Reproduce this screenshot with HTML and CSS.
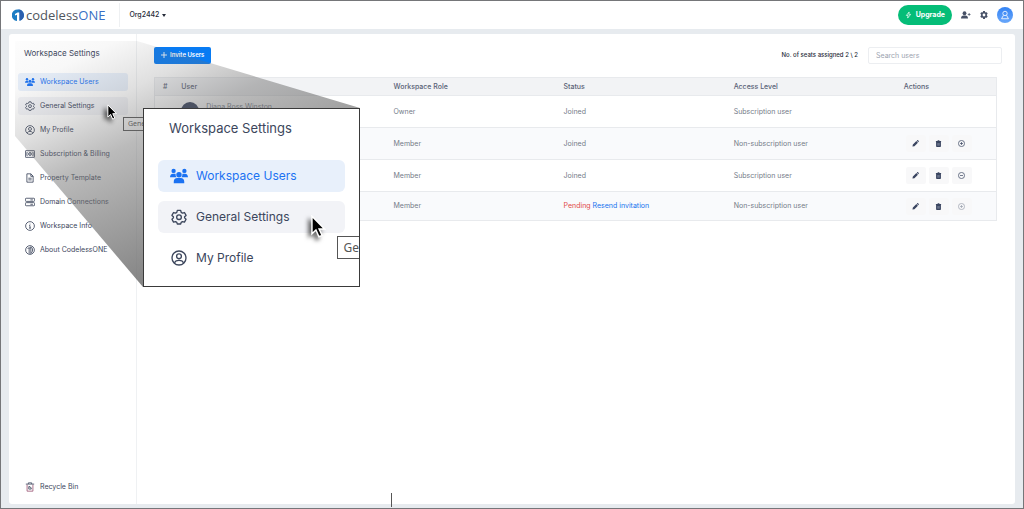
FILE: index.html
```html
<!DOCTYPE html>
<html lang="en">
<head>
<meta charset="utf-8">
<title>Workspace Users</title>
<link rel="stylesheet" href="styles.css">
</head>
<body>
<svg class="defs" aria-hidden="true">
  <symbol id="users" viewBox="0 0 24 20"><g fill="currentColor"><circle cx="12" cy="8.400" r="3.600"/><circle cx="4.800" cy="3.200" r="2.900"/><circle cx="19.200" cy="3.200" r="2.900"/><path d="M5 19.500v-2c0-3 2-4.700 4.500-4.700h5c2.500 0 4.500 1.700 4.500 4.700v2zM0 11.800c0-3 1.500-4.900 4-4.900h2c.6 0 1.100.1 1.500.3-.1 2 .3 3.400 1.400 4.600zM24 11.800c0-3-1.500-4.900-4-4.900h-2c-.6 0-1.100.1-1.500.3.1 2-.3 3.400-1.400 4.600z"/></g></symbol>
  <symbol id="gear" viewBox="0 0 24 24"><g fill="none" stroke="currentColor" stroke-width="2" stroke-linejoin="round"><path d="M9.500 2h5l.8 3 1.900 1.100 3-.8 2.400 4.300-2.200 2.100v1.600l2.200 2.100-2.400 4.300-3-.8-1.900 1.100-.8 2.500h-5l-.8-2.500-1.900-1.100-3 .8-2.400-4.300 2.200-2.100v-1.600l-2.200-2.100 2.400-4.300 3 .8L8.700 5z"/><circle cx="12" cy="12.300" r="3.500"/></g></symbol>
  <symbol id="profile" viewBox="0 0 24 24"><g fill="none" stroke="currentColor" stroke-width="2"><circle cx="12" cy="12" r="10.500"/><circle cx="12" cy="9.500" r="3.600"/><path d="M5.500 19.500c.5-3 3-4 6.500-4s6 1 6.500 4"/></g></symbol>
  <symbol id="money" viewBox="0 0 24 24"><g fill="none" stroke="currentColor" stroke-width="2"><rect x="1" y="4" width="22" height="16" rx="1"/><circle cx="12" cy="12" r="3.500"/><path d="M6 8H4.500v8H6M18 8h1.500v8H18M12 10v4"/></g></symbol>
  <symbol id="file" viewBox="0 0 24 24"><g fill="none" stroke="currentColor" stroke-width="2"><path d="M4.500 2H14l5.500 5.500V22h-15zM14 2v6h5.500M8 12.500h8M8 16.500h8"/></g></symbol>
  <symbol id="server" viewBox="0 0 24 24"><g fill="none" stroke="currentColor" stroke-width="2"><rect x="1" y="3" width="22" height="7.500" rx="2"/><rect x="1" y="13.500" width="22" height="7.500" rx="2"/><path d="M13 7h6M13 17.500h6"/></g></symbol>
  <symbol id="info" viewBox="0 0 24 24"><g fill="none" stroke="currentColor" stroke-width="2"><circle cx="12" cy="12" r="10.500"/><path d="M10 11h2v6M9.500 17h5M12 6.500v2"/></g></symbol>
  <symbol id="about" viewBox="0 0 24 24"><g fill="none" stroke="currentColor" stroke-width="2"><circle cx="12" cy="12" r="10.500"/><path d="M6 8l4-1v14M14 21V4c3 2 4 4 4 8s-1 6-4 8M10 7h4"/></g></symbol>
  <symbol id="bin" viewBox="0 0 24 24"><g fill="none" stroke-width="2"><path stroke="#9a5673" d="M5 6v16h14V6"/><path stroke="#465066" d="M2 5h20M8 5V2h8v3M9 11h3v3h3v3H9z"/></g></symbol>
  <symbol id="pencil" viewBox="0 0 16 16"><path fill="currentColor" d="M1 15l1-4.500L10 2.500 13.500 6l-8 8zM11 1.600l1-.9c.6-.6 1.400-.6 2 0L15.300 2c.6.6.6 1.400 0 2l-.9 1z"/></symbol>
  <symbol id="trash" viewBox="0 0 16 16"><path fill="currentColor" d="M2 2h3.500l1-1.500h3l1 1.500H14v2H2zM2.500 4h11v10.500c0 .8-.6 1.500-1.500 1.500H4c-.9 0-1.500-.7-1.500-1.500z"/><path stroke="#9aa3b5" d="M6 7v6M8 7v6M10 7v6"/></symbol>
  <symbol id="plus-circle" viewBox="0 0 16 16"><g fill="none" stroke="currentColor" stroke-width="1.600"><circle cx="8" cy="8" r="7"/><path d="M4.500 8h7M8 4.500v7"/></g></symbol>
  <symbol id="minus-circle" viewBox="0 0 16 16"><g fill="none" stroke="currentColor" stroke-width="1.600"><circle cx="8" cy="8" r="7"/><path d="M4.500 8h7"/></g></symbol>
  <symbol id="pointer" viewBox="0 0 12 19"><path fill="#000" stroke="#fff" stroke-width="1.200" d="M1 1v14.500l3.300-3.100 2.500 5.600 2.600-1.100-2.500-5.400h4.500z"/></symbol>
</svg>
<div class="app">
  <header class="topbar">
    <a class="brand" href="#" aria-label="codelessONE">
      <svg class="brand-mark" viewBox="0 0 24 26"><path fill="#1c7dc4" d="M12 1a11.500 11.500 0 0 1 3 22.700V7h-4L6 10v3l4-1.500V24A11.500 11.500 0 0 1 12 1z"/><path fill="#2c5fae" d="M15 7v16.700A11.500 11.500 0 0 0 12 1c3 1 3 4 3 6z"/></svg>
      <span class="brand-name">codeless<span class="brand-one">ONE</span></span>
    </a>
    <button class="org">Org2442 <span class="caret"></span></button>
    <div class="top-actions">
      <button class="upgrade"><svg viewBox="0 0 16 16"><path fill="none" stroke="#fff" stroke-width="1.600" stroke-linejoin="round" d="M9.500 1L3 9h4l-1 6 7-8.500H8.500z"/></svg>Upgrade</button>
      <button class="icon-btn" aria-label="Add user"><svg viewBox="0 0 20 16"><g fill="currentColor"><circle cx="7" cy="4.500" r="3.800"/><path d="M0 15c0-4 2-6 5-6h4c3 0 5 2 5 6zM15.500 4h1.500v2h2v1.500h-2v2h-1.500v-2h-2V6h2z"/></g></svg></button>
      <button class="icon-btn gear-btn" aria-label="Settings"><svg viewBox="0 0 16 16"><path fill="currentColor" fill-rule="evenodd" d="M6.300 0h3.400l.5 2.200 1.300.8 2.200-.7 1.700 3-1.600 1.600v2.200l1.600 1.600-1.700 3-2.200-.7-1.300.8-.5 2.200H6.300l-.5-2.200-1.300-.8-2.200.7-1.700-3 1.600-1.600V6.900L.6 5.300l1.700-3 2.200.7 1.300-.8zM8 5.200a2.800 2.800 0 1 0 0 5.600 2.800 2.800 0 0 0 0-5.600z"/></svg></button>
      <button class="account" aria-label="Account"><svg viewBox="0 0 16 16"><g fill="none" stroke="#fff" stroke-width="1.300"><circle cx="8" cy="5.500" r="3.500"/><path d="M5.500 8.500L2.500 14h11l-3-5.500"/></g></svg></button>
    </div>
  </header>

  <main class="panel">
    <aside class="sidebar">
      <h1 class="side-title">Workspace Settings</h1>
      <nav class="side-nav">
        <a class="side-link active" href="#"><svg><use href="#users"/></svg>Workspace Users</a>
        <a class="side-link hover" href="#"><svg><use href="#gear"/></svg>General Settings</a>
        <a class="side-link" href="#"><svg><use href="#profile"/></svg>My Profile</a>
        <a class="side-link" href="#"><svg><use href="#money"/></svg>Subscription &amp; Billing</a>
        <a class="side-link" href="#"><svg><use href="#file"/></svg>Property Template</a>
        <a class="side-link" href="#"><svg><use href="#server"/></svg>Domain Connections</a>
        <a class="side-link" href="#"><svg><use href="#info"/></svg>Workspace Info</a>
        <a class="side-link" href="#"><svg><use href="#about"/></svg>About CodelessONE</a>
        <a class="side-link recycle" href="#"><svg><use href="#bin"/></svg>Recycle Bin</a>
      </nav>
    </aside>

    <section class="content">
      <div class="toolbar">
        <button class="invite"><svg viewBox="0 0 10 10"><path stroke="#fff" stroke-width="1.500" d="M5 0v10M0 5h10"/></svg>Invite Users</button>
        <span class="seats">No. of seats assigned 2 \ 2</span>
        <input class="search" type="search" placeholder="Search users" aria-label="Search users">
      </div>
      <table class="users">
        <colgroup><col class="c-num"><col class="c-user"><col class="c-mid"><col class="c-mid"><col class="c-mid"><col></colgroup>
        <thead><tr><th>#</th><th>User</th><th>Workspace Role</th><th>Status</th><th>Access Level</th><th>Actions</th></tr></thead>
        <tbody>
          <tr><td></td><td><div class="person"><span class="avatar"></span><span>Diana Ross Winston</span></div></td><td>Owner</td><td>Joined</td><td>Subscription user</td><td></td></tr>
          <tr><td></td><td></td><td>Member</td><td>Joined</td><td>Non-subscription user</td><td><div class="actions"><button aria-label="Edit"><svg><use href="#pencil"/></svg></button><button aria-label="Delete"><svg><use href="#trash"/></svg></button><button aria-label="Add seat"><svg><use href="#plus-circle"/></svg></button></div></td></tr>
          <tr><td></td><td></td><td>Member</td><td>Joined</td><td>Subscription user</td><td><div class="actions"><button aria-label="Edit"><svg><use href="#pencil"/></svg></button><button aria-label="Delete"><svg><use href="#trash"/></svg></button><button aria-label="Remove seat"><svg><use href="#minus-circle"/></svg></button></div></td></tr>
          <tr class="last"><td></td><td></td><td>Member</td><td><span class="pending">Pending</span> <a class="resend" href="#">Resend invitation</a></td><td>Non-subscription user</td><td><div class="actions"><button aria-label="Edit"><svg><use href="#pencil"/></svg></button><button aria-label="Delete"><svg><use href="#trash"/></svg></button><button aria-label="Add seat" disabled><svg><use href="#plus-circle"/></svg></button></div></td></tr>
        </tbody>
      </table>
    </section>
  </main>

  <div class="tip tip-small">Gene</div>
  <svg class="beam" viewBox="0 0 345 246" aria-hidden="true">
    <defs><linearGradient id="fade" gradientUnits="userSpaceOnUse" x1="-9" y1="-20" x2="132" y2="277"><stop offset="0" stop-color="#707070" stop-opacity="0"/><stop offset=".2" stop-color="#707070" stop-opacity=".05"/><stop offset=".35" stop-color="#707070" stop-opacity=".22"/><stop offset=".5" stop-color="#707070" stop-opacity=".48"/><stop offset="1" stop-color="#707070" stop-opacity=".95"/></linearGradient></defs>
    <path fill="url(#fade)" d="M0 0h122l223 67v179H128L0 95z"/>
  </svg>
  <svg class="pointer pointer-small" aria-hidden="true"><use href="#pointer"/></svg>

  <section class="callout">
    <h2 class="callout-title">Workspace Settings</h2>
    <nav class="callout-nav">
      <a class="callout-link active" href="#"><svg><use href="#users"/></svg>Workspace Users</a>
      <a class="callout-link hover" href="#"><svg><use href="#gear"/></svg>General Settings</a>
      <a class="callout-link" href="#"><svg><use href="#profile"/></svg>My Profile</a>
    </nav>
    <div class="tip tip-large">Ge</div>
    <svg class="pointer pointer-large" aria-hidden="true"><use href="#pointer"/></svg>
  </section>
  <span class="text-caret"></span>
</div>
</body>
</html>
```

FILE: styles.css
```css
* { box-sizing: border-box; }
body {
  margin: 0;
  font-family: Inter, "Liberation Sans", sans-serif;
  font-size: 7px;
  line-height: 10px;
  color: #3c465c;
}
h1, h2 { margin: 0; font-weight: 400; }
a { color: inherit; text-decoration: none; }
button { margin: 0; padding: 0; border: 0; background: none; font: inherit; color: inherit; }
.defs { position: absolute; width: 0; height: 0; }

.app {
  position: relative;
  display: flex;
  flex-direction: column;
  min-height: 100vh;
  background: #e7ebef;
  border: 1px solid #757679;
  overflow: hidden;
}

.topbar { display: flex; align-items: center; height: 28px; padding: 0 10px 0 11px; background: #fff; }
.brand { display: flex; align-items: center; gap: 2px; }
.brand-mark { width: 12px; height: 13px; }
.brand-name { font-family: "Open Sans", sans-serif; font-size: 13px; line-height: 18px; color: #50565e; }
.brand-one { color: #386fc4; }
.org {
  display: flex; align-items: center; gap: 3px;
  height: 24px; margin-left: 14px; padding-left: 9px;
  border-left: 1px solid #eef0f2;
  font-size: 7px; font-weight: 500; color: #252b38;
}
.caret { border: 2px solid transparent; border-top: 3px solid #252b38; border-bottom: 0; }
.top-actions { display: flex; align-items: center; margin-left: auto; }
.upgrade {
  display: flex; align-items: center; gap: 4px;
  height: 20px; padding: 0 7px; border-radius: 10px;
  background: #05bd78; color: #fff; font-size: 7px; font-weight: 700;
}
.upgrade svg { width: 7px; height: 8px; }
.icon-btn { display: flex; margin-left: 9px; color: #465066; }
.icon-btn svg { width: 10px; height: 8px; }
.gear-btn svg { width: 8px; }
.account {
  display: flex; align-items: center; justify-content: center;
  width: 16px; height: 16px; margin-left: 9px; border-radius: 50%;
  background: linear-gradient(#3483f4, #69a7fa);
}
.account svg { width: 10px; height: 10px; }

.panel { flex: 1; display: flex; margin: 5px 8px 4px; background: #fff; border-radius: 3px; }
.sidebar {
  display: flex; flex-direction: column;
  width: 128px; padding: 13px 8px 8px 9px;
  border-right: 1px solid #eff1f3;
}
.side-title { padding-left: 6px; font-size: 8px; line-height: 12px; }
.side-nav { flex: 1; display: flex; flex-direction: column; gap: 6px; margin-top: 14px; }
.side-link {
  display: flex; align-items: center; gap: 5px;
  height: 18px; padding: 0 7px; border-radius: 3px;
  white-space: nowrap;
}
.side-link svg { width: 10px; height: 10px; }
.recycle { margin-top: auto; }
.active { background: #e8f0fb; color: #1b72f2; }
.hover { background: #f2f3f7; }

.content { flex: 1; padding: 12px 13px 0 17px; }
.toolbar { display: flex; align-items: center; height: 18px; }
.invite {
  display: flex; align-items: center; gap: 3px;
  height: 17px; padding: 0 7px; border-radius: 2px;
  background: #087bf3; color: #fff; font-size: 6px; font-weight: 600;
}
.invite svg { width: 6px; height: 6px; }
.seats { margin-left: auto; font-size: 6px; font-weight: 500; color: #252b38; }
.search {
  width: 134px; height: 17px; margin-left: 10px; padding: 0 7px;
  border: 1px solid #eceef1; border-radius: 2px; background: #fff;
  font: inherit; color: #3c465c;
}
.search::placeholder { color: #9ca3af; }

.users {
  width: calc(100% - 5px); margin-top: 13px;
  table-layout: fixed; border-collapse: collapse;
  border: 1px solid #e8eaed;
}
.c-num { width: 2%; }
.c-user { width: 25.2%; }
.c-mid { width: 20.2%; }
.users th { height: 18px; padding: 0 0 0 10px; background: #f2f3f5; text-align: left; font-weight: 500; color: #596276; white-space: nowrap; }
.users th:first-child { padding-left: 8px; }
.users td { height: 32px; padding: 0 0 0 10px; border-top: 1px solid #e8eaed; color: #747b88; white-space: nowrap; }
.users .last td { height: 29px; }
.users tbody tr:nth-child(even) { background: #f9fafc; }
.person { display: flex; gap: 7px; height: 20px; }
.avatar { width: 18px; height: 18px; border-radius: 50%; background: #2f3b57; }
.pending { color: #e04848; }
.resend { color: #1673ef; }
.actions { display: flex; gap: 3px; padding-left: 2px; }
.actions button {
  display: flex; align-items: center; justify-content: center;
  width: 20px; height: 17px; border-radius: 2px; background: #f8f8f9; color: #3a4560;
}
.actions button:disabled { color: #9aa1ad; }
.actions svg { width: 7px; height: 7px; }

/* Magnified view of the menu, with the beam that joins it to its source */
.beam { position: absolute; left: 14px; top: 40px; width: 345px; height: 246px; }
.callout {
  position: absolute; left: 142px; top: 107px; width: 217px; height: 179px;
  padding: 10px 14px; overflow: hidden;
  background: #fff; border: 1px solid #3a3a3a;
}
.callout-title { padding-left: 11px; font-size: 13px; line-height: 18px; }
.callout-nav { display: flex; flex-direction: column; gap: 9px; margin-top: 23px; }
.callout-link {
  display: flex; align-items: center; gap: 8px;
  height: 32px; padding: 0 12px; border-radius: 6px;
  font-size: 12px; line-height: 16px;
}
.callout-link svg { width: 18px; height: 16px; }
.tip {
  position: absolute; background: #fff; border: 1px solid #555; color: #555;
  font-family: "Noto Sans", sans-serif;
}
.tip-small { left: 122px; top: 116px; width: 60px; height: 14px; padding: 1px 4px; }
.tip-large { right: 0; top: 127px; height: 23px; padding: 3px 0 3px 5px; border-right: 0; font-size: 12px; line-height: 16px; }
.pointer { position: absolute; filter: drop-shadow(-3px 3px 2px rgba(0, 0, 0, .6)); }
.pointer-small { left: 106px; top: 103px; width: 10px; height: 16px; }
.pointer-large { left: 166px; top: 106px; width: 16px; height: 23px; }
.text-caret { position: absolute; left: 390px; bottom: 1px; width: 1px; height: 14px; background: #555; }
```
